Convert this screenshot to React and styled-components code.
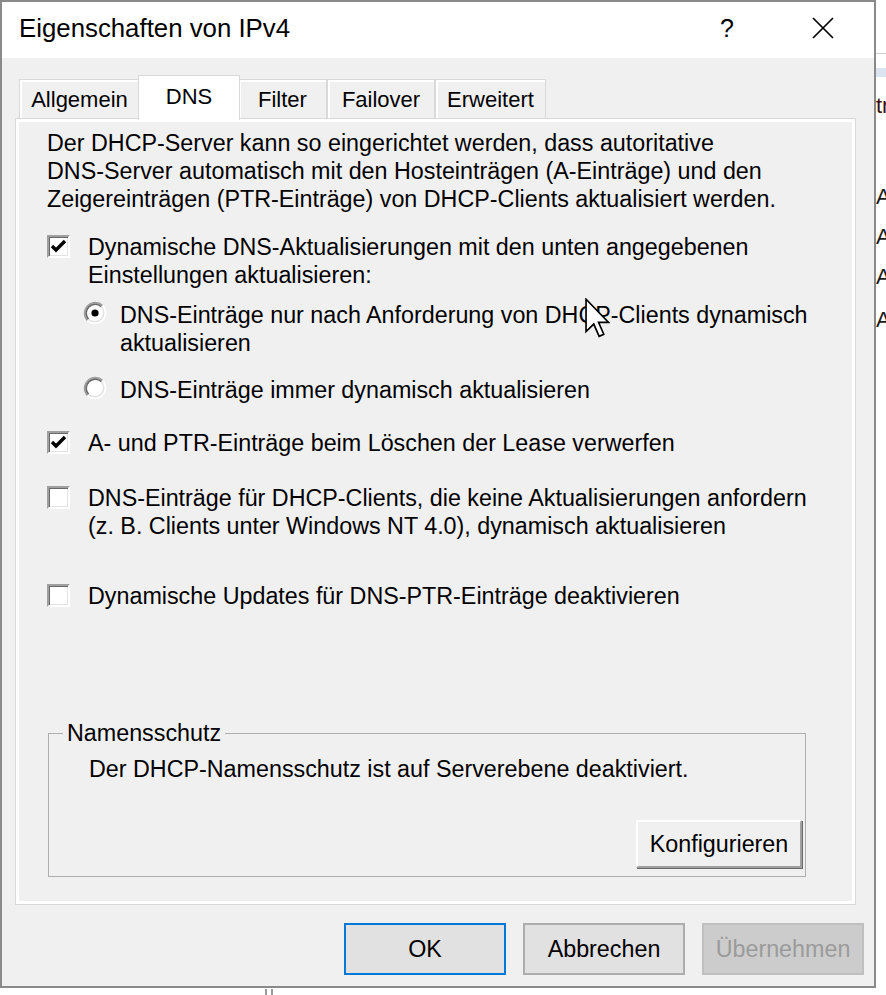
import React from "react";
import styled, { createGlobalStyle } from "styled-components";

const GlobalStyle = createGlobalStyle`
  html, body { margin: 0; padding: 0; background: #ffffff; }
  body { font-family: "Liberation Sans", Arial, sans-serif; color: #000; }
  * { box-sizing: border-box; }
`;

const FONT = "23.3px";

const Page = styled.div`
  position: relative;
  width: 886px;
  height: 995px;
  overflow: hidden;
  background: #ffffff;
  display: flex;
  flex-direction: column;
`;

const Upper = styled.div`
  display: flex;
  height: 988px;
  flex: none;
`;

const Dialog = styled.section`
  width: 876px;
  height: 988px;
  flex: none;
  border: 2px solid #8a8a8a;
  background: #f0f0f0;
  display: flex;
  flex-direction: column;
`;

const TitleBar = styled.header`
  height: 56px;
  flex: none;
  background: #ffffff;
  display: flex;
  align-items: center;
  padding: 0 3px 0 17px;
`;

const Title = styled.h1`
  flex: 1;
  margin: 0 0 4px 0;
  font-size: 25.8px;
  font-weight: normal;
  white-space: nowrap;
`;

const CaptionButton = styled.div`
  width: 96px;
  height: 56px;
  display: flex;
  align-items: center;
  justify-content: center;
  font-size: 25px;
  padding-bottom: 4px;
`;

const Body = styled.div`
  display: flex;
  flex-direction: column;
  padding: 17px 18px 0 13px;
`;

const TabStrip = styled.div`
  height: 43px;
  display: flex;
  align-items: flex-end;
  padding-left: 4px;
  position: relative;
  z-index: 1;
`;

const Tab = styled.div`
  width: ${(p) => p.$w}px;
  height: ${(p) => (p.$active ? 45 : 39)}px;
  margin: ${(p) => (p.$active ? "0 -2px -2px -2px" : "0")};
  padding-top: ${(p) => (p.$active ? 7 : 6)}px;
  background: ${(p) => (p.$active ? "#ffffff" : "#f0f0f0")};
  border: 1px solid #d9d9d9;
  border-bottom: none;
  box-shadow: ${(p) => (p.$active ? "none" : "inset 2px 2px 0 #ffffff")};
  position: relative;
  z-index: ${(p) => (p.$active ? 2 : 1)};
  text-align: center;
  font-size: 22px;
  line-height: 28px;
  white-space: nowrap;
`;

const Panel = styled.div`
  height: 787px;
  flex: none;
  border: 1px solid #d9d9d9;
  box-shadow: inset 0 0 0 3px #ffffff;
  background: #f0f0f0;
  padding: 10px 20px 0 31px;
  display: flex;
  flex-direction: column;
`;

const Para = styled.p`
  margin: 0;
  font-size: ${FONT};
  line-height: 28px;
  white-space: nowrap;
`;

const OptionRow = styled.div`
  display: flex;
  align-items: flex-start;
  gap: ${(p) => p.$gap}px;
  margin-top: ${(p) => p.$mt}px;
  margin-left: ${(p) => p.$indent || 0}px;
  font-size: ${FONT};
  line-height: 28px;
  white-space: nowrap;
`;

const Box = styled.span`
  flex: none;
  width: 23px;
  height: 23px;
  margin-top: 2px;
  background: #ffffff;
  border-top: 2px solid #a0a0a0;
  border-left: 2px solid #a0a0a0;
  border-right: 2px solid #ffffff;
  border-bottom: 2px solid #ffffff;
  box-shadow: inset 1px 1px 0 #696969, inset -1px -1px 0 #e3e3e3;
  display: flex;
  align-items: center;
  justify-content: center;
`;

const RadioWrap = styled.span`
  flex: none;
  width: 24px;
  height: 24px;
  display: flex;
`;

const GroupBox = styled.fieldset`
  margin: 109px 0 0 1px;
  width: 758px;
  height: 158px;
  padding: 0;
  border: 1px solid #aeaeae;
  min-width: 0;
`;

const Legend = styled.legend`
  margin-left: 14px;
  padding: 0 4px;
  font-size: ${FONT};
  line-height: 28px;
`;

const GroupInner = styled.div`
  height: 129px;
  display: flex;
  flex-direction: column;
  padding: 8px 3px 8px 40px;
`;

const GroupText = styled.div`
  font-size: ${FONT};
  line-height: 28px;
  white-space: nowrap;
`;

const ClassicButton = styled.button`
  align-self: flex-end;
  margin-top: auto;
  width: 166px;
  height: 48px;
  background: #f0f0f0;
  border-top: 2px solid #ffffff;
  border-left: 2px solid #ffffff;
  border-right: 2px solid #a0a0a0;
  border-bottom: 2px solid #a0a0a0;
  box-shadow: 1px 1px 0 #696969;
  font-family: "Liberation Sans", Arial, sans-serif;
  font-size: ${FONT};
  color: #000;
  padding: 0;
`;

const Footer = styled.div`
  display: flex;
  justify-content: flex-end;
  gap: 17px;
  padding: 18px 10px 0 0;
`;

const variants = {
  default: { bg: "#e1e1e1", border: "#0078d7", color: "#000" },
  normal: { bg: "#e1e1e1", border: "#adadad", color: "#000" },
  disabled: { bg: "#cccccc", border: "#bfbfbf", color: "#9b9b9b" },
};

const DialogButton = styled.button`
  width: 162px;
  height: 52px;
  background: ${(p) => variants[p.$variant].bg};
  border: 2px solid ${(p) => variants[p.$variant].border};
  color: ${(p) => variants[p.$variant].color};
  font-family: "Liberation Sans", Arial, sans-serif;
  font-size: ${FONT};
  padding: 0;
`;

const Peek = styled.div`
  flex: 1;
  overflow: hidden;
  background: #ffffff;
  display: flex;
  flex-direction: column;
`;

const PeekHeader = styled.div`
  height: 54px;
  flex: none;
  border-bottom: 1px solid #cfcfcf;
`;

const PeekBand = styled.div`
  margin-top: 14px;
  height: 9px;
  flex: none;
  background: #dbe5f2;
`;

const PeekLine = styled.div`
  margin-top: ${(p) => p.$mt}px;
  font-size: 22px;
  line-height: 40px;
  white-space: nowrap;
  color: ${(p) => p.$color || "#1a1a1a"};
`;

const BottomStrip = styled.div`
  flex: 1;
  background: #ffffff;
  padding-left: 265px;
`;

const Splitter = styled.div`
  width: 8px;
  height: 7px;
  margin-top: 1px;
  border-left: 2px solid #9a9a9a;
  border-right: 2px solid #9a9a9a;
`;

const Cursor = styled.svg`
  position: absolute;
  left: 585px;
  top: 298px;
`;

const CheckMark = () => (
  <svg width="17" height="15" viewBox="0 0 17 15">
    <path d="M2 7 L6 11 L15 2" fill="none" stroke="#000" strokeWidth="3.4" />
  </svg>
);

const CheckBox = ({ checked }) => <Box>{checked && <CheckMark />}</Box>;

const Radio = ({ checked }) => (
  <RadioWrap>
    <svg width="24" height="24" viewBox="0 0 24 24">
      <circle cx="12" cy="12" r="10" fill="#ffffff" />
      <path d="M4.58 19.42 A10.5 10.5 0 0 1 19.42 4.58" fill="none" stroke="#a0a0a0" strokeWidth="2" />
      <path d="M5.64 18.36 A9 9 0 0 1 18.36 5.64" fill="none" stroke="#696969" strokeWidth="1.5" />
      <path d="M19.42 4.58 A10.5 10.5 0 0 1 4.58 19.42" fill="none" stroke="#ffffff" strokeWidth="2" />
      <path d="M18.36 5.64 A9 9 0 0 1 5.64 18.36" fill="none" stroke="#e3e3e3" strokeWidth="1.5" />
      {checked && <circle cx="12" cy="12" r="3.6" fill="#000" />}
    </svg>
  </RadioWrap>
);

const CloseIcon = () => (
  <svg width="24" height="24" viewBox="0 0 24 24">
    <path d="M2 2 L22 22 M22 2 L2 22" stroke="#000" strokeWidth="1.7" fill="none" />
  </svg>
);

const tabs = [
  { label: "Allgemein", w: 121 },
  { label: "DNS", w: 102, active: true },
  { label: "Filter", w: 89 },
  { label: "Failover", w: 108 },
  { label: "Erweitert", w: 111 },
];

export default function App() {
  return (
    <>
      <GlobalStyle />
      <Page>
        <Upper>
          <Dialog>
            <TitleBar>
              <Title>Eigenschaften von IPv4</Title>
              <CaptionButton>?</CaptionButton>
              <CaptionButton>
                <CloseIcon />
              </CaptionButton>
            </TitleBar>
            <Body>
              <TabStrip>
                {tabs.map((t) => (
                  <Tab key={t.label} $w={t.w} $active={t.active}>
                    {t.label}
                  </Tab>
                ))}
              </TabStrip>
              <Panel>
                <Para>
                  Der DHCP-Server kann so eingerichtet werden, dass autoritative
                  <br />
                  DNS-Server automatisch mit den Hosteinträgen (A-Einträge) und den
                  <br />
                  Zeigereinträgen (PTR-Einträge) von DHCP-Clients aktualisiert werden.
                </Para>
                <OptionRow $mt={20} $gap={18}>
                  <CheckBox checked />
                  <span>
                    Dynamische DNS-Aktualisierungen mit den unten angegebenen
                    <br />
                    Einstellungen aktualisieren:
                  </span>
                </OptionRow>
                <OptionRow $mt={12} $gap={13} $indent={36}>
                  <Radio checked />
                  <span>
                    DNS-Einträge nur nach Anforderung von DHCP-Clients dynamisch
                    <br />
                    aktualisieren
                  </span>
                </OptionRow>
                <OptionRow $mt={19} $gap={13} $indent={36}>
                  <Radio />
                  <span>DNS-Einträge immer dynamisch aktualisieren</span>
                </OptionRow>
                <OptionRow $mt={25} $gap={18}>
                  <CheckBox checked />
                  <span>A- und PTR-Einträge beim Löschen der Lease verwerfen</span>
                </OptionRow>
                <OptionRow $mt={27} $gap={18}>
                  <CheckBox />
                  <span>
                    DNS-Einträge für DHCP-Clients, die keine Aktualisierungen anfordern
                    <br />
                    (z. B. Clients unter Windows NT 4.0), dynamisch aktualisieren
                  </span>
                </OptionRow>
                <OptionRow $mt={42} $gap={18}>
                  <CheckBox />
                  <span>Dynamische Updates für DNS-PTR-Einträge deaktivieren</span>
                </OptionRow>
                <GroupBox>
                  <Legend>Namensschutz</Legend>
                  <GroupInner>
                    <GroupText>Der DHCP-Namensschutz ist auf Serverebene deaktiviert.</GroupText>
                    <ClassicButton type="button">Konfigurieren</ClassicButton>
                  </GroupInner>
                </GroupBox>
              </Panel>
            </Body>
            <Footer>
              <DialogButton type="button" $variant="default">OK</DialogButton>
              <DialogButton type="button" $variant="normal">Abbrechen</DialogButton>
              <DialogButton type="button" $variant="disabled" disabled>
                Übernehmen
              </DialogButton>
            </Footer>
          </Dialog>
          <Peek>
            <PeekHeader />
            <PeekBand />
            <PeekLine $mt={9} $color="#3a1010">tr</PeekLine>
            <PeekLine $mt={51}>A</PeekLine>
            <PeekLine $mt={0}>A</PeekLine>
            <PeekLine $mt={0}>A</PeekLine>
            <PeekLine $mt={3}>A</PeekLine>
          </Peek>
        </Upper>
        <BottomStrip>
          <Splitter />
        </BottomStrip>
        <Cursor width="25" height="40" viewBox="0 0 12 19">
          <path
            d="M0.5 0.5 L0.5 16 L4.2 12.4 L6.8 18.3 L9 17.3 L6.5 11.6 L11.3 11.6 Z"
            fill="#ffffff"
            stroke="#000"
            strokeWidth="0.8"
            strokeLinejoin="miter"
          />
        </Cursor>
      </Page>
    </>
  );
}
